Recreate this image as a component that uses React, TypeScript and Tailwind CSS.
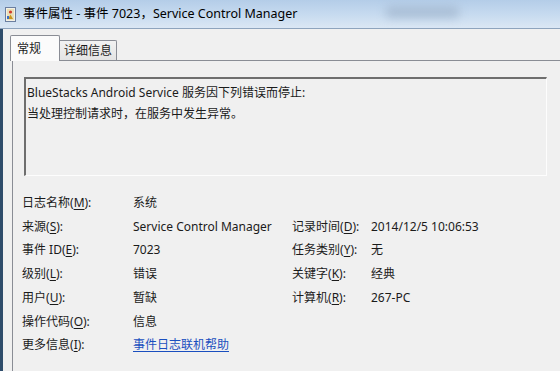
import React from "react";

const font = { fontFamily: '"Noto Sans", "Noto Sans CJK SC", sans-serif' };

function Acc({ text, k }: { text: string; k: string }) {
  return (
    <span>
      {text}(<span className="underline underline-offset-2">{k}</span>):
    </span>
  );
}

function TitleIcon() {
  return (
    <svg width="11" height="15" viewBox="0 0 11 15" className="shrink-0">
      <rect x="0.5" y="0.5" width="10" height="14" fill="#f4f1e6" stroke="#6b7fa0" />
      <rect x="2" y="2" width="7" height="11" fill="#e9dfb8" />
      <circle cx="5.5" cy="5" r="1.6" fill="#d23a2a" />
      <path d="M3 12 L5.5 7.5 L8 12 Z" fill="#c9961e" />
      <rect x="2" y="9" width="2" height="3" fill="#3b6fc4" />
    </svg>
  );
}

const rows: { l: [string, string]; v: React.ReactNode; rl?: [string, string]; rv?: string }[] = [
  { l: ["日志名称", "M"], v: "系统" },
  { l: ["来源", "S"], v: "Service Control Manager", rl: ["记录时间", "D"], rv: "2014/12/5 10:06:53" },
  { l: ["事件 ID", "E"], v: "7023", rl: ["任务类别", "Y"], rv: "无" },
  { l: ["级别", "L"], v: "错误", rl: ["关键字", "K"], rv: "经典" },
  { l: ["用户", "U"], v: "暂缺", rl: ["计算机", "R"], rv: "267-PC" },
  { l: ["操作代码", "O"], v: "信息" },
  {
    l: ["更多信息", "I"],
    v: <span className="text-[#1a4fbf] underline underline-offset-2">事件日志联机帮助</span>,
  },
];

export default function App() {
  return (
    <div className="w-[560px] h-[371px] overflow-hidden bg-[#f0f0f0] flex flex-col text-[#1b1b1b]" style={font}>
      {/* title bar */}
      <div className="h-[29px] shrink-0 flex items-center gap-[7px] pl-[5px] border-b border-[#8ea4bd] bg-gradient-to-b from-[#b4cde8] via-[#c6daef] to-[#dbe7f4] relative">
        <TitleIcon />
        <span className="text-[12.5px] leading-none text-black">事件属性 - 事件 7023，Service Control Manager</span>
        <div className="absolute left-[385px] top-[6px] w-[75px] h-[12px] rounded-full bg-[#9fb4cc] blur-[5px] opacity-70" />
      </div>

      {/* body */}
      <div className="flex-1 flex flex-col border-l-[3px] border-[#2f4d6b] pl-[9px] pt-[6px]">
        {/* tabs */}
        <div className="flex items-end h-[25px]">
          <div className="relative z-10 -ml-[2px] -mb-px h-[26px] w-[50px] bg-[#fbfbfb] border border-b-0 border-[#8a8d95] rounded-t-[2px] text-[12px] pl-[6px] pt-[4px]">
            常规
          </div>
          <div className="h-[20px] w-[57px] bg-gradient-to-b from-[#f2f2f2] to-[#e4e4e4] border border-l-0 border-b-0 border-[#8a8d95] rounded-tr-[2px] text-[12px] pl-[4px] leading-[19px]">
            详细信息
          </div>
        </div>

        {/* panel */}
        <div className="flex-1 border-l border-t border-[#8a8d95] bg-[#f0f0f0] pl-[11px] pt-[16px]">
          <div className="w-[523px] h-[99px] border-t-2 border-l-2 border-t-[#6e6e6e] border-l-[#6e6e6e] border-r border-b border-r-[#fdfdfd] border-b-[#fdfdfd] pl-[1px] pt-[3px] text-[12px] leading-[21px]">
            <div>BlueStacks Android Service 服务因下列错误而停止:</div>
            <div>当处理控制请求时，在服务中发生异常。</div>
          </div>

          <div className="mt-[15px] -ml-[2px] grid grid-cols-[111px_159px_79px_1fr] text-[12px] leading-[23.7px]">
            {rows.map((r, i) => (
              <React.Fragment key={i}>
                <Acc text={r.l[0]} k={r.l[1]} />
                <span>{r.v}</span>
                <span>{r.rl ? <Acc text={r.rl[0]} k={r.rl[1]} /> : null}</span>
                <span>{r.rv ?? ""}</span>
              </React.Fragment>
            ))}
          </div>
        </div>
      </div>
    </div>
  );
}
